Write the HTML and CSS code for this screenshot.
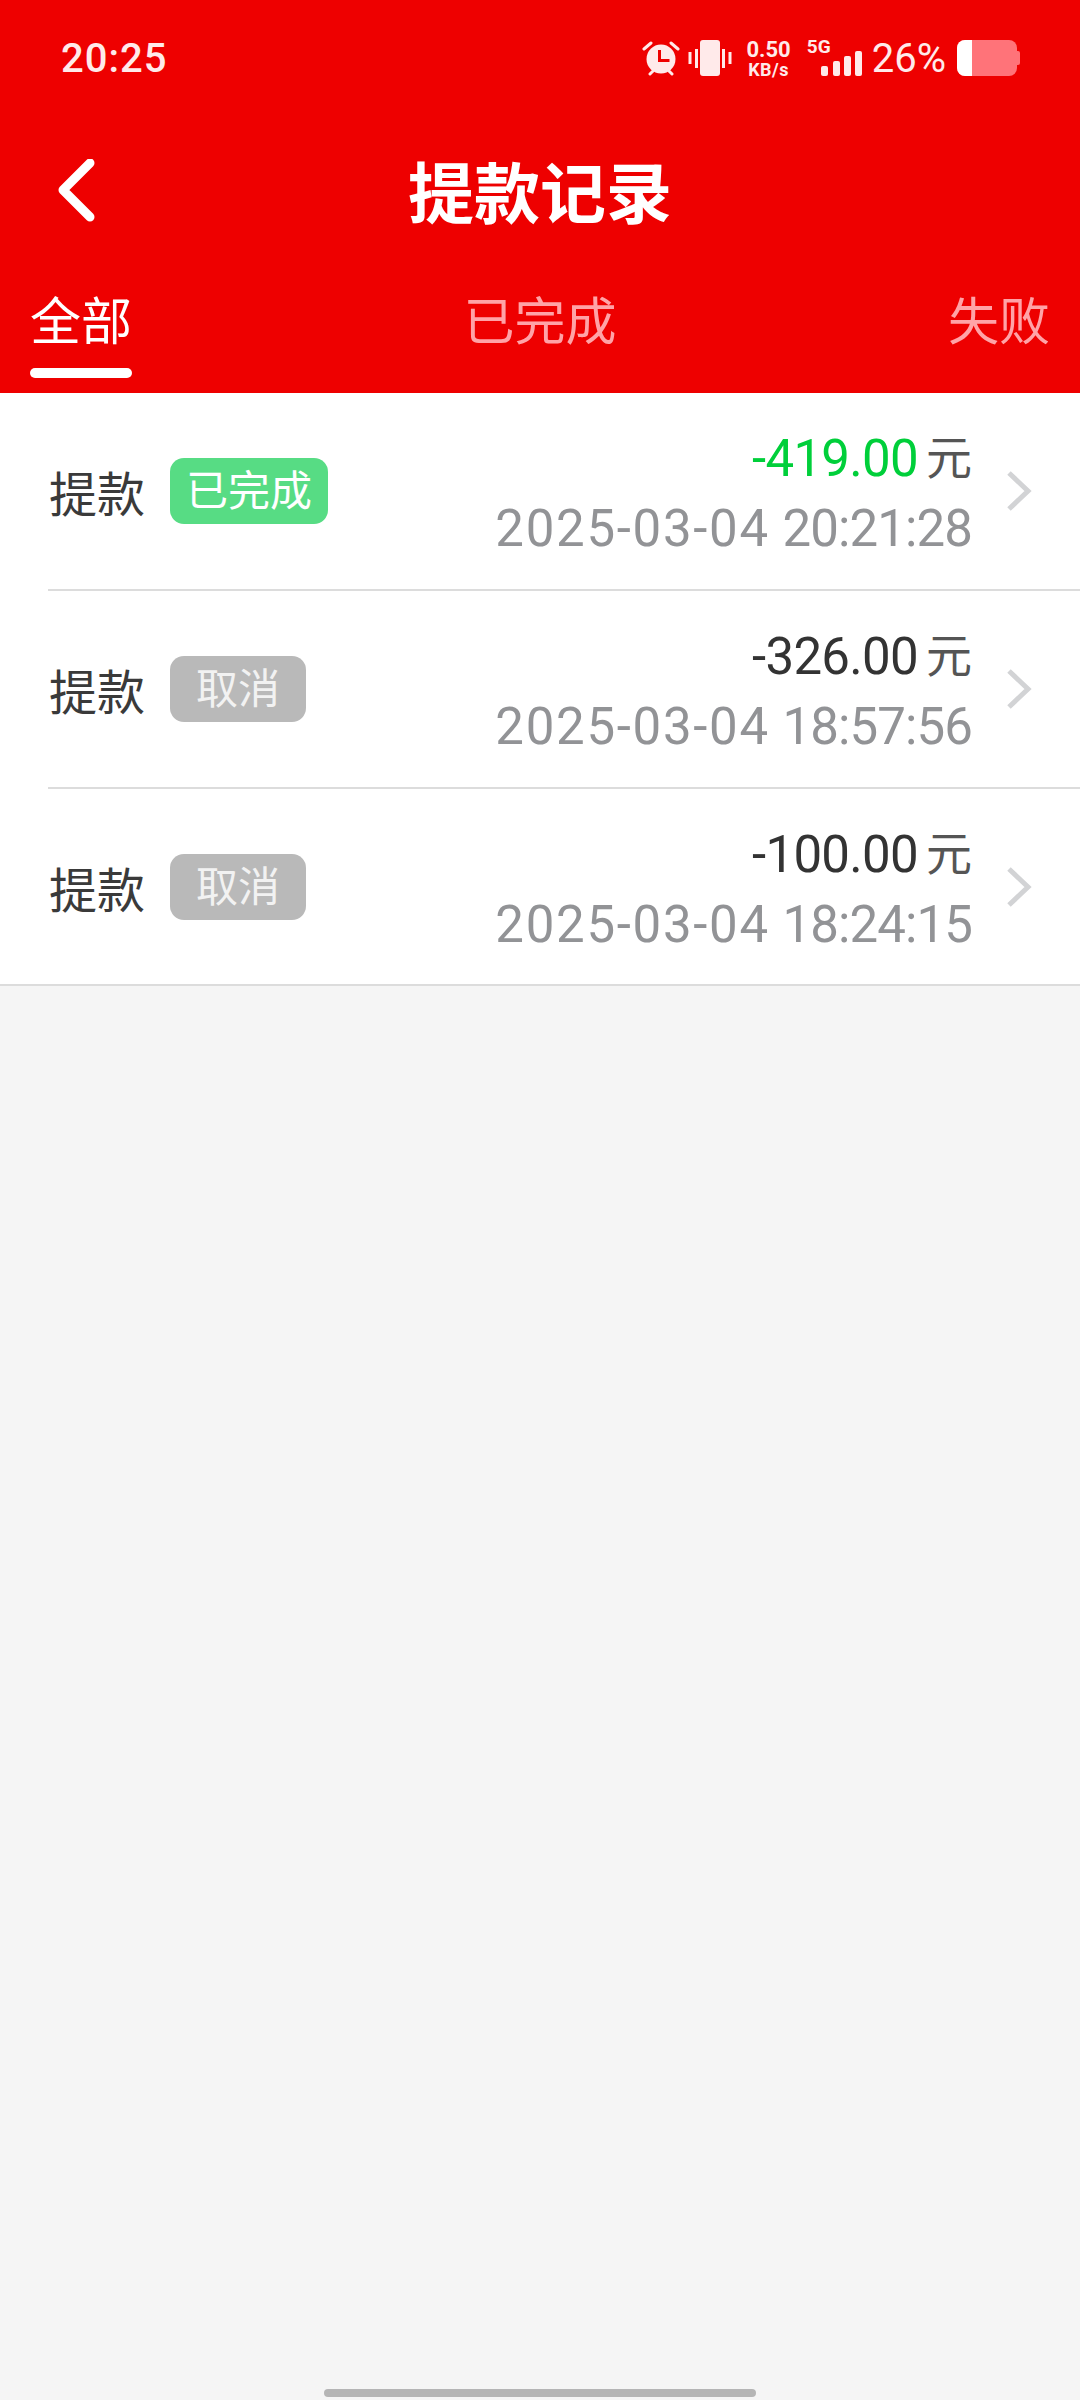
FILE: index.html
```html
<!DOCTYPE html>
<html lang="zh-CN">
<head>
    <meta charset="UTF-8">
    <meta name="viewport" content="width=device-width, initial-scale=1.0">
    <title>提款记录</title>
    <link rel="stylesheet" href="styles.css">
</head>
<body>
<div class="app">
    <div class="header">
        <div class="status-bar">
            <span class="clock">20:25</span>
            <div class="status-icons">
                <svg width="38" height="38" viewBox="0 0 38 38">
                    <circle cx="19" cy="20" r="14.5" fill="#ffeaea"/>
                    <path d="M17.500 11v10.500h10" fill="none" stroke="#ee0000" stroke-width="3"/>
                    <path d="M2 10L9 4M36 10L29 4M8 35l3-3M30 35l-3-3" stroke="#ffeaea" stroke-width="3" stroke-linecap="round"/>
                </svg>
                <svg class="icon-vibrate" width="44" height="38" viewBox="0 0 44 38">
                    <rect x="12" y="1" width="20" height="36" rx="3" fill="#ffeaea"/>
                    <path d="M2 13v12M8.500 10v19M35.500 10v19M42 13v12" stroke="#ffeaea" stroke-width="3"/>
                </svg>
                <div class="net-speed"><span>0.50</span><span>KB/s</span></div>
                <div class="signal">
                    <span class="signal-label">5G</span>
                    <svg width="41" height="25" viewBox="0 0 41 25">
                        <rect x="0" y="15" width="7" height="10" rx="2" fill="#ffeaea"/>
                        <rect x="12" y="10" width="7" height="15" rx="2" fill="#ffeaea"/>
                        <rect x="23" y="5" width="7" height="20" rx="2" fill="#ffeaea"/>
                        <rect x="34" y="0" width="7" height="25" rx="2" fill="#ffeaea"/>
                    </svg>
                </div>
                <span class="battery-text">26%</span>
                <div class="battery">
                    <div class="battery-body"><div class="battery-level"></div></div>
                    <div class="battery-cap"></div>
                </div>
            </div>
        </div>

        <div class="title-bar">
            <svg class="back-icon" width="44" height="64" viewBox="0 0 44 64">
                <path d="M36 4L9 31l27 27" fill="none" stroke="#fff" stroke-width="9" stroke-linecap="round" stroke-linejoin="round"/>
            </svg>
            <h1>提款记录</h1>
        </div>

        <div class="tabs">
            <div class="tab active">全部</div>
            <div class="tab">已完成</div>
            <div class="tab">失败</div>
        </div>
    </div>

    <div class="record-list">
        <div class="record">
            <div class="record-main">
                <span class="record-name">提款</span>
                <span class="badge badge-done">已完成</span>
            </div>
            <div class="record-info">
                <div class="amount"><span class="num green">-419.00</span><span class="unit">元</span></div>
                <div class="time"><span class="date">2025-03-04</span> <span class="hms">20:21:28</span></div>
            </div>
            <svg class="arrow" width="26" height="42" viewBox="0 0 26 42"><path d="M3 3l19 18L3 39" fill="none" stroke="#d2d3d5" stroke-width="5"/></svg>
        </div>
        <div class="record">
            <div class="record-main">
                <span class="record-name">提款</span>
                <span class="badge badge-cancel">取消</span>
            </div>
            <div class="record-info">
                <div class="amount"><span class="num">-326.00</span><span class="unit">元</span></div>
                <div class="time"><span class="date">2025-03-04</span> <span class="hms">18:57:56</span></div>
            </div>
            <svg class="arrow" width="26" height="42" viewBox="0 0 26 42"><path d="M3 3l19 18L3 39" fill="none" stroke="#d2d3d5" stroke-width="5"/></svg>
        </div>
        <div class="record">
            <div class="record-main">
                <span class="record-name">提款</span>
                <span class="badge badge-cancel">取消</span>
            </div>
            <div class="record-info">
                <div class="amount"><span class="num">-100.00</span><span class="unit">元</span></div>
                <div class="time"><span class="date">2025-03-04</span> <span class="hms">18:24:15</span></div>
            </div>
            <svg class="arrow" width="26" height="42" viewBox="0 0 26 42"><path d="M3 3l19 18L3 39" fill="none" stroke="#d2d3d5" stroke-width="5"/></svg>
        </div>
    </div>

    <div class="home-bar"></div>
</div>
</body>
</html>
```
FILE: styles.css
```css
body {
    margin: 0;
    font-family: Roboto, 'Noto Sans CJK SC', sans-serif;
    background-color: #f5f5f5;
    color: #333;
}

.app {
    width: 1080px;
    height: 2400px;
    display: flex;
    flex-direction: column;
    overflow: hidden;
}

.header {
    background-color: #ee0000;
    height: 393px;
    color: white;
}

.status-bar {
    height: 116px;
    padding: 0 60px 0 61px;
    display: flex;
    align-items: center;
    justify-content: space-between;
    color: #ffeaea;
}

.clock {
    font-size: 40px;
    font-weight: 500;
    letter-spacing: 1px;
}

.status-icons {
    display: flex;
    align-items: center;
}

.icon-vibrate {
    margin-left: 8px;
}

.net-speed {
    display: flex;
    flex-direction: column;
    align-items: center;
    margin-left: 14px;
    font-weight: 700;
}

.net-speed span:first-child {
    font-size: 22px;
    line-height: 23px;
}

.net-speed span:last-child {
    font-size: 18px;
    line-height: 18px;
    letter-spacing: 0.5px;
}

.signal {
    position: relative;
    width: 55px;
    height: 36px;
    margin-left: 16px;
    display: flex;
    justify-content: flex-end;
    align-items: flex-end;
}

.signal-label {
    position: absolute;
    left: 0;
    top: -3px;
    font-size: 19px;
    line-height: 20px;
    font-weight: 700;
}

.battery-text {
    font-size: 40px;
    margin-left: 10px;
}

.battery {
    display: flex;
    align-items: center;
    margin-left: 11px;
}

.battery-body {
    width: 60px;
    height: 36px;
    background-color: #ff7379;
    border-radius: 8px;
    overflow: hidden;
}

.battery-level {
    width: 15px;
    height: 100%;
    background-color: white;
}

.battery-cap {
    width: 3px;
    height: 14px;
    background-color: #ff7379;
    border-radius: 0 2px 2px 0;
}

.title-bar {
    position: relative;
    height: 146px;
    padding-bottom: 6px;
    display: flex;
    align-items: center;
    justify-content: center;
}

.back-icon {
    position: absolute;
    left: 54px;
    top: 43px;
}

h1 {
    margin: 0;
    font-size: 66px;
    font-weight: 700;
}

.tabs {
    display: flex;
    justify-content: space-between;
    padding: 0 30px;
}

.tab {
    height: 125px;
    font-size: 51px;
    line-height: 110px;
    color: #ffa3a7;
}

.tab.active {
    color: white;
    position: relative;
}

.tab.active::after {
    content: '';
    position: absolute;
    left: 0;
    right: 0;
    bottom: 15px;
    height: 10px;
    background-color: white;
    border-radius: 5px;
}

.record-list {
    background-color: white;
    border-bottom: 2px solid #dcdcdc;
}

.record {
    box-sizing: border-box;
    height: 198px;
    margin-left: 48px;
    padding-right: 48px;
    display: flex;
    align-items: center;
    border-bottom: 2px solid #dcdcdc;
}

.record:last-child {
    height: 195px;
    border-bottom: none;
}

.record-main {
    display: flex;
    align-items: center;
    flex-grow: 1;
    padding-left: 1px;
}

.record-name {
    font-size: 48px;
    color: #3a3a3a;
}

.badge {
    margin-left: 25px;
    height: 66px;
    line-height: 68px;
    border-radius: 14px;
    color: white;
    font-size: 42px;
}

.badge-done {
    padding: 0 16px;
    background-color: #57dc84;
}

.badge-cancel {
    padding: 0 26px;
    background-color: #b9b9b9;
    color: #f2f2f2;
}

.record-info {
    padding-top: 4px;
    text-align: right;
}

.amount {
    height: 72px;
    line-height: 72px;
    font-size: 51px;
}

.amount .num {
    position: relative;
    top: 2px;
    color: #333;
    letter-spacing: -0.7px;
}

.amount .green {
    color: #00cf3a;
}

.amount .unit {
    margin-left: 8px;
    font-size: 46px;
    color: #555;
}

.time {
    height: 72px;
    line-height: 72px;
    font-size: 51px;
    color: #929396;
}

.time .date {
    letter-spacing: 1.7px;
}

.time .hms {
    letter-spacing: -0.9px;
}

.arrow {
    margin-left: 34px;
}

.home-bar {
    width: 432px;
    height: 8px;
    margin: auto auto 3px;
    border-radius: 4px;
    background-color: #b5b5b5;
}
```
